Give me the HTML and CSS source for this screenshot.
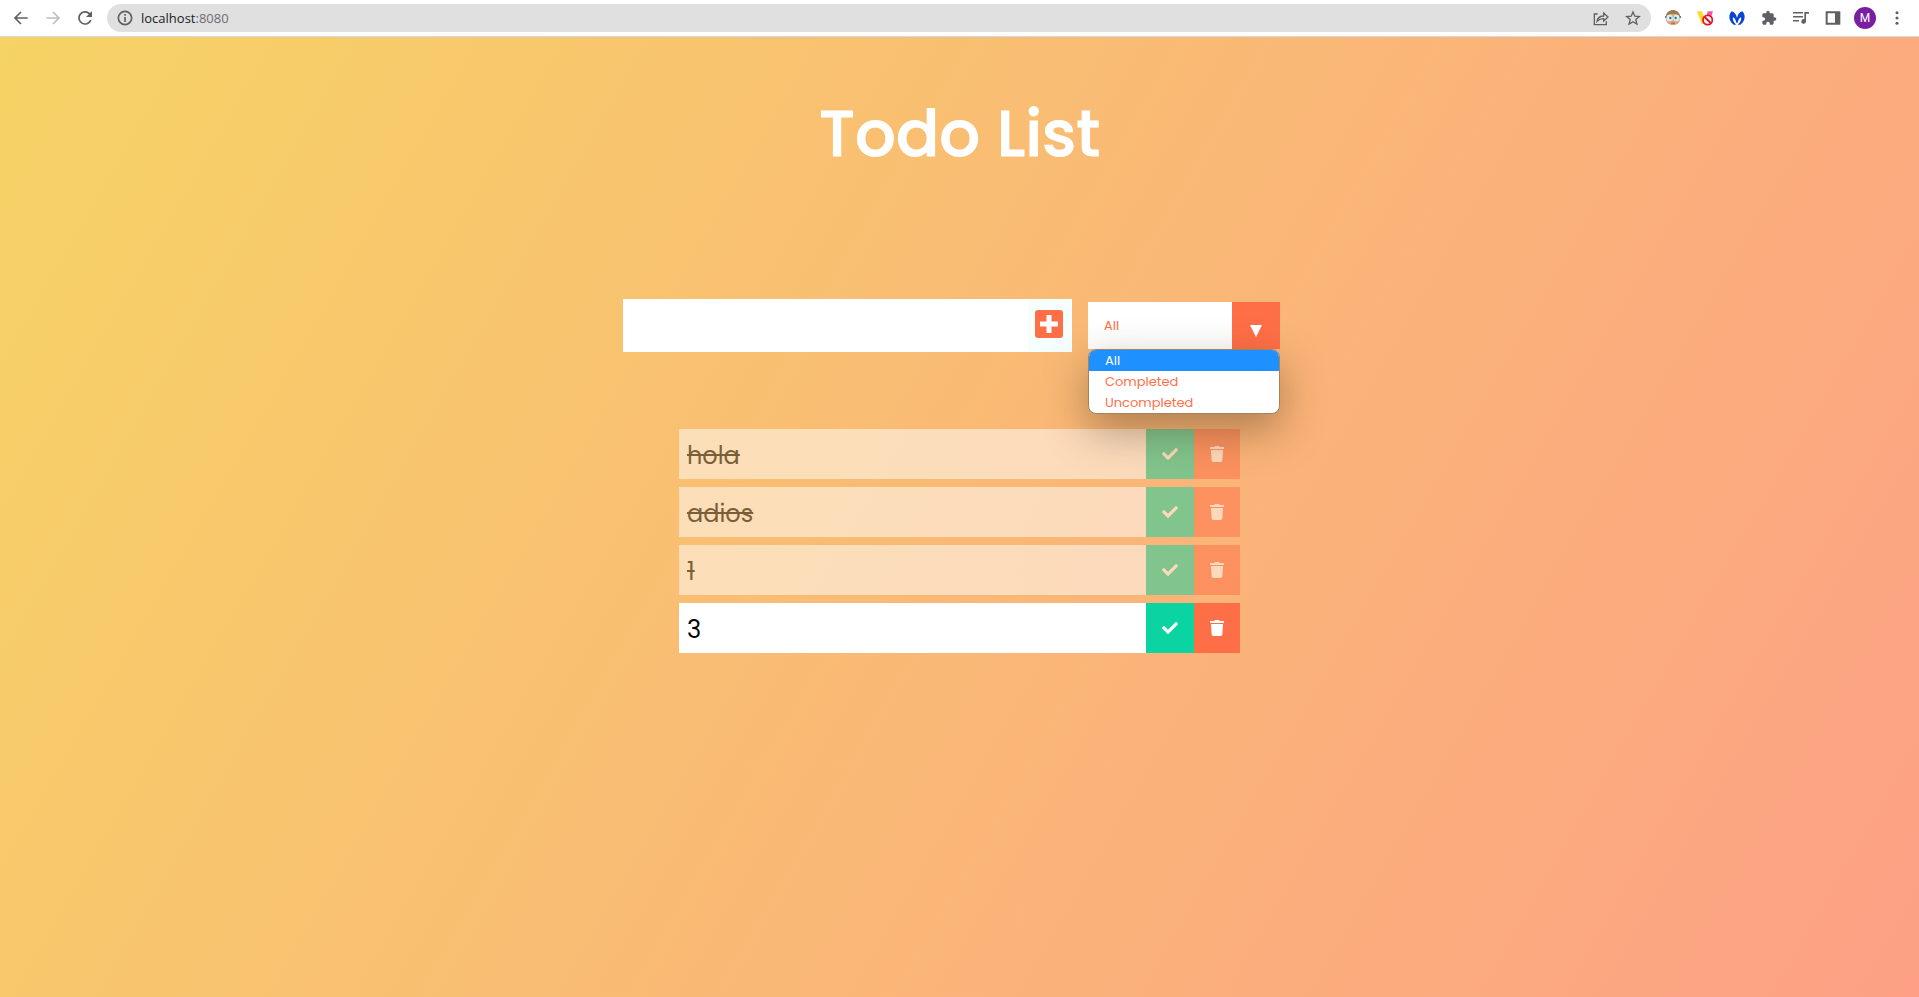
FILE: index.html
```html
<!DOCTYPE html>
<html lang="en">
<head>
<meta charset="utf-8">
<title>Todo List</title>
<link rel="stylesheet" href="styles.css">
</head>
<body>
<svg class="defs" width="0" height="0" aria-hidden="true">
  <symbol id="check" viewBox="0 0 512 512"><path d="M173.9 439.4l-166.4-166.4c-10-10-10-26.200 0-36.200l36.200-36.200c10-10 26.200-10 36.200 0L192 312.700 432.100 72.600c10-10 26.200-10 36.200 0l36.200 36.200c10 10 10 26.200 0 36.200l-294.400 294.400c-10 10-26.200 10-36.200 0z"/></symbol>
  <symbol id="trash" viewBox="0 0 448 512"><path d="M432 32H312l-9.400-18.700A24 24 0 0 0 281.100 0H166.800a23.700 23.700 0 0 0-21.400 13.300L136 32H16A16 16 0 0 0 0 48v32a16 16 0 0 0 16 16h416a16 16 0 0 0 16-16V48a16 16 0 0 0-16-16zM53.200 467a48 48 0 0 0 47.900 45h245.800a48 48 0 0 0 47.900-45L416 128H32z"/></symbol>
</svg>

<nav class="browser" aria-label="Browser">
  <button class="tool" aria-label="Back"><svg viewBox="0 0 24 24"><path class="line" d="M22 12H4M12 3l-9 9 9 9"/></svg></button>
  <button class="tool faded" aria-label="Forward"><svg viewBox="0 0 24 24"><path class="line" d="M2 12h18M12 3l9 9-9 9"/></svg></button>
  <button class="tool" aria-label="Reload"><svg viewBox="0 0 24 24"><path d="M19.500 4.500A10.400 10.400 0 1 0 22 15h-2.700A7.800 7.800 0 1 1 17.600 6.400L13.500 10.500H22.500V1.500z"/></svg></button>
  <div class="address">
    <svg class="info" viewBox="0 0 24 24"><circle class="line" cx="12" cy="12" r="10"/><path d="M10.800 10.500h2.500V18h-2.500zM10.800 6h2.500v2.500h-2.500z"/></svg>
    <span class="url">localhost<span class="port">:8080</span></span>
    <button class="tool" aria-label="Share"><svg viewBox="0 0 24 24"><path class="thin" d="M7 6H2v16h18v-5M6 17c1-6 5-8 10-8V4.500l6.500 6-6.500 6V13c-4 0-7 1-10 4z"/></svg></button>
    <button class="tool" aria-label="Bookmark"><svg viewBox="0 0 24 24"><path class="thin" d="M12 3l2.700 6.300 6.800.6-5.200 4.500 1.600 6.600-5.900-3.500-5.900 3.500 1.600-6.600L2.500 9.900l6.800-.6z"/></svg></button>
  </div>
  <div class="extensions">
    <button class="tool" aria-label="Avatar extension"><svg viewBox="0 0 24 24"><circle cx="12" cy="12" r="11" fill="#dba880"/><path d="M1 10C2 3 7 0 12 0s10 3 11 10L17 6H7z" fill="#a07b50"/><path d="M0 9h24v3H0z" fill="#87715b"/><circle cx="7" cy="12" r="4.800" fill="#d9f0f5"/><circle cx="17" cy="12" r="4.800" fill="#d9f0f5"/><circle cx="8" cy="12" r="1.800" fill="#397689"/><circle cx="16" cy="12" r="1.800" fill="#397689"/><path d="M9 19h6v1.500H9z" fill="#a56551"/></svg></button>
    <button class="tool" aria-label="Blocked extension"><svg viewBox="0 0 24 24"><path d="M0 2h7l5 11v8H7z" fill="#ffdc22"/><path d="M16 2h8l-3 9h-7z" fill="#ff4faa"/><circle cx="16" cy="15" r="7" fill="#fff" stroke="#df1525" stroke-width="2.600"/><path d="M11.500 10.500l9 9" stroke="#df1525" stroke-width="3"/></svg></button>
    <button class="tool" aria-label="Malware protection"><svg viewBox="0 0 24 24"><path d="M4 2c4 1 7 5 8 10 1-5 4-9 8-10 5 5 5 14-3 20h-4c4-4 6-7 5-11-3 1-4 4-5 8h-2c-1-4-2-7-5-8-1 4 1 7 5 11H7C-1 16-1 7 4 2z" fill="#0b43d6"/></svg></button>
    <button class="tool" aria-label="Extensions"><svg viewBox="0 0 24 24"><path d="M20.500 11H19V7a2 2 0 0 0-2-2h-4V3.500a2.500 2.500 0 0 0-5 0V5H4a2 2 0 0 0-2 2v3.800h1.500a2.700 2.700 0 0 1 0 5.400H2V20a2 2 0 0 0 2 2h3.800v-1.500a2.700 2.700 0 0 1 5.400 0V22H17a2 2 0 0 0 2-2v-4h1.500a2.500 2.500 0 0 0 0-5z"/></svg></button>
    <button class="tool" aria-label="Media"><svg viewBox="0 0 24 24"><path d="M0 3h15v2.200H0zM0 9h15v2.200H0zM0 15h9v2.200H0zM17 3h7v2.500h-4.500V17a3.500 3.500 0 1 1-2.500-3.300z"/></svg></button>
    <button class="tool" aria-label="Side panel"><svg viewBox="0 0 24 24"><path fill-rule="evenodd" d="M1 2h22v20H1zM4 5v14h11V5z"/></svg></button>
    <button class="profile" aria-label="Profile">M</button>
    <button class="tool" aria-label="Menu"><svg viewBox="0 0 24 24"><circle cx="12" cy="4" r="2.300"/><circle cx="12" cy="12" r="2.300"/><circle cx="12" cy="20" r="2.300"/></svg></button>
  </div>
</nav>

<main class="page">
  <header class="heading"><h1>Todo List</h1></header>
  <form class="controls">
    <div class="entry">
      <input class="todo-input" type="text" aria-label="New todo">
      <button class="add" type="button" aria-label="Add todo"><svg viewBox="0 0 28 28"><rect width="28" height="28" rx="3" fill="#ff6f47"/><path d="M11.500 5h5v6.500H23v5h-6.500V23h-5v-6.500H5v-5h6.500z" fill="#fff"/></svg></button>
    </div>
    <div class="filter">
      <select class="filter-select" aria-label="Filter todos">
        <option>All</option><option>Completed</option><option>Uncompleted</option>
      </select>
      <span class="arrow" aria-hidden="true"><svg viewBox="0 0 12 12"><path d="M0 0h12L6 12z"/></svg></span>
      <ul class="menu" role="listbox" aria-label="Filter options">
        <li class="choice selected" role="option" aria-selected="true">All</li>
        <li class="choice" role="option" aria-selected="false">Completed</li>
        <li class="choice" role="option" aria-selected="false">Uncompleted</li>
      </ul>
    </div>
  </form>
  <ul class="todos">
    <li class="todo completed"><span class="label">hola</span><button class="complete" aria-label="Complete hola"><svg><use href="#check"/></svg></button><button class="remove" aria-label="Delete hola"><svg><use href="#trash"/></svg></button></li>
    <li class="todo completed"><span class="label">adios</span><button class="complete" aria-label="Complete adios"><svg><use href="#check"/></svg></button><button class="remove" aria-label="Delete adios"><svg><use href="#trash"/></svg></button></li>
    <li class="todo completed"><span class="label">1</span><button class="complete" aria-label="Complete 1"><svg><use href="#check"/></svg></button><button class="remove" aria-label="Delete 1"><svg><use href="#trash"/></svg></button></li>
    <li class="todo"><span class="label">3</span><button class="complete" aria-label="Complete 3"><svg><use href="#check"/></svg></button><button class="remove" aria-label="Delete 3"><svg><use href="#trash"/></svg></button></li>
  </ul>
</main>
</body>
</html>
```
FILE: styles.css
```css
* {
  box-sizing: border-box;
  margin: 0;
  padding: 0;
}

body {
  display: flex;
  flex-direction: column;
  min-height: 100vh;
  font-family: Poppins, Inter, sans-serif;
}

button {
  border: 0;
  background: none;
}

ul {
  list-style: none;
}

.defs {
  position: absolute;
}

/* Browser toolbar */
.browser {
  display: flex;
  align-items: center;
  gap: 16px;
  padding: 4px 14px 4px 13px;
  border-bottom: 1px solid #d5d8dc;
  background: #fff;
}

.tool {
  display: flex;
  color: #5f6063;
}

.tool svg,
.info {
  width: 16px;
  height: 16px;
  fill: currentColor;
}

.faded {
  color: #bcbdbf;
}

.browser .line,
.browser .thin {
  fill: none;
  stroke: currentColor;
  stroke-width: 2.5;
}

.browser .thin {
  stroke-width: 2;
}

.address {
  display: flex;
  flex: 1;
  align-items: center;
  gap: 16px;
  height: 28px;
  margin: 0 -2px;
  padding: 0 10px;
  border-radius: 14px;
  background: #e0e0e0;
  color: #5f6063;
}

.url {
  flex: 1;
  margin-left: -8px;
  color: #202124;
  font: 13px/20px "Open Sans", sans-serif;
}

.port {
  color: #6c6e71;
}

.extensions {
  display: flex;
  align-items: center;
  gap: 16px;
}

.extensions .profile {
  width: 22px;
  height: 22px;
  margin: 0 -3px;
  border-radius: 50%;
  background: #7b1fa2;
  color: #fff;
  font: 12px/22px Roboto, sans-serif;
}

/* Todo page */
.page {
  flex: 1;
  background: linear-gradient(120deg, #f6d365, #fda085);
}

.heading,
.controls {
  display: flex;
  align-items: center;
  justify-content: center;
  min-height: 192px;
  padding-top: 1px;
}

.heading h1 {
  color: #fff;
  font-size: 64px;
  font-weight: 500;
  line-height: 96px;
  -webkit-text-stroke: 1px #fff;
}

.entry {
  display: flex;
  width: 449px;
  height: 53px;
}

.todo-input {
  flex: 1;
  min-width: 0;
  padding: 8px;
  border: 0;
  background: #fff;
  font: inherit;
  font-size: 24px;
}

.add {
  display: grid;
  place-items: center;
  width: 44px;
  padding: 0 2px 3px 0;
  background: #f5fffe;
}

.add svg {
  width: 28px;
  height: 28px;
}

.filter {
  position: relative;
  display: flex;
  width: 192px;
  height: 47px;
  margin: 0 16px;
}

.filter-select {
  flex: 1;
  min-width: 0;
  padding: 0 16px;
  border: 0;
  border-radius: 0;
  appearance: none;
  background: #fff;
  color: #ff6f47;
  font: inherit;
  font-size: 13px;
}

.arrow {
  display: grid;
  place-items: center;
  width: 48px;
  padding: 10px 1px 0 0;
  background: #ff6f47;
}

.arrow svg {
  width: 12px;
  height: 12px;
  fill: #fff;
}

.menu {
  position: absolute;
  top: 100%;
  left: 0;
  z-index: 1;
  width: 100%;
  overflow: hidden;
  border: 1px solid #a4845f;
  border-radius: 8px;
  background: #fff;
  box-shadow: 0 16px 44px rgba(60, 40, 20, 0.4);
}

.choice {
  padding: 0 16px;
  color: #ff6f47;
  font-size: 13px;
  line-height: 21px;
}

.selected {
  background: #1e90ff;
  color: #fff;
}

.todos {
  display: grid;
  gap: 8px;
  width: 561px;
  max-width: 100%;
  margin: 8px auto;
}

.todo {
  display: flex;
  height: 50px;
  background: #fff;
  color: #000;
  font-size: 24px;
}

.label {
  flex: 1;
  padding: 2px 8px 0;
  line-height: 50px;
}

.completed {
  opacity: 0.5;
}

.completed .label {
  text-decoration: line-through;
}

.complete,
.remove {
  display: grid;
  place-items: center;
  width: 48px;
  padding-bottom: 1px;
  background: #0bd4a2;
}

.remove {
  width: 46px;
  background: #ff6f47;
}

.todo svg {
  width: 16px;
  height: 16px;
  fill: #fff;
}
```
